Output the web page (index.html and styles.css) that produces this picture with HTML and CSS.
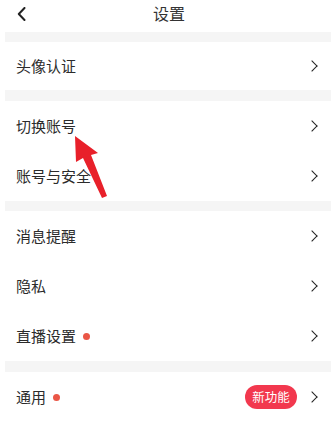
FILE: index.html
```html
<!DOCTYPE html>
<html lang="zh">
<head>
<meta charset="utf-8">
<link rel="stylesheet" href="styles.css">
</head>
<body>
<div class="page">
  <header class="topbar">
    <div class="back">
      <svg width="9" height="14" viewBox="0 0 9 14"><path d="M7.5 1 L1.8 7 L7.5 13" fill="none" stroke="#222" stroke-width="2" stroke-linecap="round" stroke-linejoin="round"/></svg>
    </div>
    <div class="title">设置</div>
    <div></div>
  </header>
  <div class="band b10"></div>
  <div class="row h48"><span class="label">头像认证</span><span class="chev"></span></div>
  <div class="band b11"></div>
  <div class="row"><span class="label">切换账号</span><span class="chev"></span></div>
  <div class="row"><span class="label">账号与安全</span><span class="chev"></span></div>
  <div class="band b10"></div>
  <div class="row"><span class="label">消息提醒</span><span class="chev"></span></div>
  <div class="row"><span class="label">隐私</span><span class="chev"></span></div>
  <div class="row"><span class="label">直播设置</span><span class="dot"></span><span class="chev"></span></div>
  <div class="band b11"></div>
  <div class="row"><span class="label">通用</span><span class="dot"></span><span class="badge">新功能</span><span class="chev"></span></div>
  <svg class="arrow" width="331" height="433" viewBox="0 0 331 433">
    <polygon points="75,136 98,153 91,155 107,196 102,198 83,158 76,162" fill="#e8202a"/>
  </svg>
</div>
</body>
</html>
```
FILE: styles.css
```css
html, body {
  margin: 0;
  padding: 0;
  background: #fff;
}
body {
  font-family: "Noto Sans CJK SC", "Noto Sans", sans-serif;
  color: #333;
}
.page {
  position: relative;
  width: 331px;
  height: 433px;
  overflow: hidden;
}
.topbar {
  height: 32px;
  display: grid;
  grid-template-columns: 1fr auto 1fr;
  align-items: center;
}
.back {
  padding-left: 17px;
  display: flex;
  align-items: center;
  padding-bottom: 5px;
}
.title {
  font-size: 16px;
  color: #333;
  padding-left: 7px;
  padding-bottom: 7px;
}
.band {
  background: #f5f5f5;
  margin-left: 5px;
}
.b10 { height: 10px; }
.b11 { height: 11px; }
.row {
  height: 50px;
  display: flex;
  align-items: center;
  padding: 0 12px 0 16px;
}
.row.h48 { height: 48px; }
.label {
  font-size: 15px;
  color: #2b2b2b;
  padding-bottom: 2px;
}
.dot {
  width: 7px;
  height: 7px;
  border-radius: 50%;
  background: #ea5646;
  margin-left: 7px;
}
.chev {
  margin-left: auto;
  width: 7px;
  height: 7px;
  border-right: 1.8px solid #222;
  border-top: 1.8px solid #222;
  transform: rotate(45deg);
  margin-right: 3px;
}
.badge + .chev {
  margin-left: 11px;
}
.badge {
  margin-left: auto;
  background: #f2384e;
  color: #fff;
  font-size: 12.5px;
  height: 24px;
  line-height: 24px;
  width: 52px;
  text-align: center;
  border-radius: 12px;
}
.arrow {
  position: absolute;
  left: 0;
  top: 0;
  pointer-events: none;
}
```
